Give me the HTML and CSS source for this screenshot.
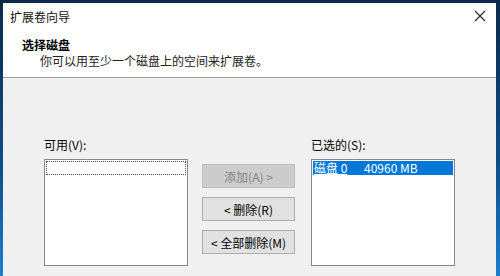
FILE: index.html
```html
<!DOCTYPE html>
<html>
<head>
<meta charset="utf-8">
<link rel="stylesheet" href="styles.css">
</head>
<body>
<div class="window">
  <div class="header">
    <div class="titlebar">
      <span class="title">扩展卷向导</span>
      <svg class="close" width="12" height="12" viewBox="0 0 12 12"><path d="M1 1L11 11M11 1L1 11" stroke="#222" stroke-width="1.1" fill="none"/></svg>
    </div>
    <div class="heading">选择磁盘</div>
    <div class="subheading">你可以用至少一个磁盘上的空间来扩展卷。</div>
  </div>
  <div class="body">
    <div class="col">
      <div class="label">可用(V):</div>
      <div class="listbox"><div class="focusrow"></div></div>
    </div>
    <div class="buttons">
      <div class="btn disabled">添加(A) &gt;</div>
      <div class="btn">&lt; 删除(R)</div>
      <div class="btn">&lt; 全部删除(M)</div>
    </div>
    <div class="col right">
      <div class="label">已选的(S):</div>
      <div class="listbox"><div class="selrow"><span class="disk">磁盘 0</span><span>40960 MB</span></div></div>
    </div>
  </div>
</div>
</body>
</html>
```
FILE: styles.css
```css
html, body {
  margin: 0;
  padding: 0;
}
body {
  width: 500px;
  height: 276px;
  overflow: hidden;
  background: linear-gradient(180deg, #0b2a4a 0%, #0d4f8a 60%, #1a7fd0 100%);
  font-family: "Noto Sans CJK SC", "Microsoft YaHei", sans-serif;
  font-size: 12px;
  color: #000;
}
.window {
  margin: 3px 4px 0 3px;
  height: 273px;
  background: #f0f0f0;
  display: flex;
  flex-direction: column;
}
.header {
  background: #fff;
  height: 74px;
  border-bottom: 1px solid #a0a0a0;
  box-sizing: content-box;
}
.titlebar {
  display: flex;
  justify-content: space-between;
  align-items: center;
  height: 28px;
  padding: 0 10px 0 7px;
}
.title {
  font-size: 12px;
  color: #111;
  line-height: 28px;
}
.close {
  margin-top: -2px;
}
.heading {
  font-weight: bold;
  padding-left: 19px;
  margin-top: 6px;
  line-height: 16px;
}
.subheading {
  padding-left: 37px;
  line-height: 16px;
  color: #222;
}
.body {
  display: flex;
  padding: 59px 0 0 41px;
}
.col {
  display: flex;
  flex-direction: column;
}
.label {
  line-height: 16px;
  height: 16px;
  margin-bottom: 6px;
}
.listbox {
  width: 140px;
  height: 103px;
  background: #fff;
  border: 1px solid #828790;
  padding: 1px;
  box-sizing: content-box;
}
.focusrow {
  height: 12px;
  border: 1px dotted #555;
}
.selrow {
  height: 14px;
  background: #0078d7;
  color: #fff;
  display: flex;
  align-items: center;
  line-height: 14px;
  padding-left: 1px;
}
.disk {
  width: 50px;
  text-decoration: underline;
}
.buttons {
  display: flex;
  flex-direction: column;
  gap: 9px;
  margin: 27px 0 0 14px;
  width: 93px;
}
.btn {
  height: 22px;
  border: 1px solid #adadad;
  background: #e1e1e1;
  display: flex;
  align-items: center;
  justify-content: center;
  font-size: 12px;
}
.btn.disabled {
  background: #cccccc;
  border-color: #bfbfbf;
  color: #838383;
}
.right {
  margin-left: 16px;
}
```
